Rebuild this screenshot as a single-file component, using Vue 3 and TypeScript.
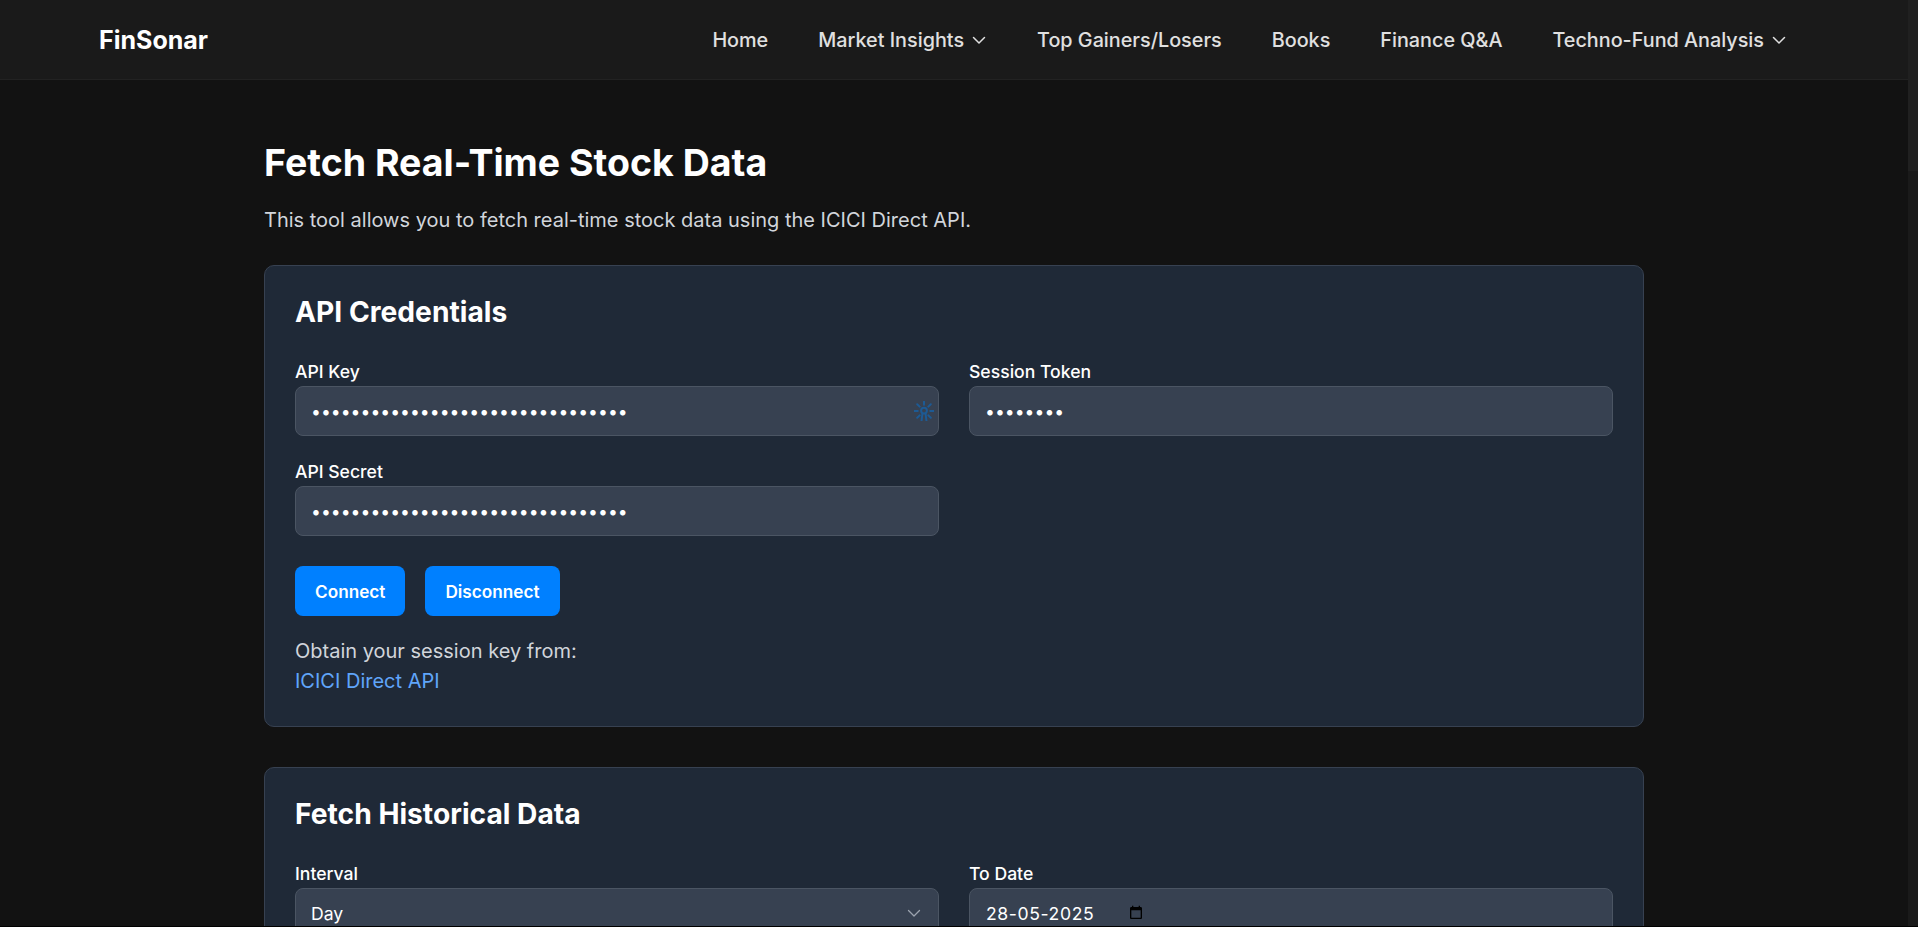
<script setup lang="ts">
const navItems: { label: string; caret?: boolean }[] = [
  { label: 'Home' },
  { label: 'Market Insights', caret: true },
  { label: 'Top Gainers/Losers' },
  { label: 'Books' },
  { label: 'Finance Q&A' },
  { label: 'Techno-Fund Analysis', caret: true },
]
const secret32 = 'x'.repeat(32)
const secret8 = 'x'.repeat(8)
</script>

<template>
  <div class="shell">
    <div class="page">
      <header class="nav">
        <div class="brand">FinSonar</div>
        <nav class="links">
          <a v-for="item in navItems" :key="item.label" class="link">
            {{ item.label }}
            <svg v-if="item.caret" class="caret" viewBox="0 0 16 16" fill="none" stroke="currentColor" stroke-width="1.5" stroke-linecap="round" stroke-linejoin="round"><path d="M2.5 5.5 8 11l5.5-5.5" /></svg>
          </a>
        </nav>
      </header>

      <main class="main">
        <h1 class="title">Fetch Real-Time Stock Data</h1>
        <p class="intro">This tool allows you to fetch real-time stock data using the ICICI Direct API.</p>

        <section class="card">
          <h2 class="card-title">API Credentials</h2>
          <div class="grid">
            <div class="field">
              <label class="label">API Key</label>
              <div class="input-wrap">
                <input class="input" type="password" :value="secret32" readonly />
                <svg class="ext" viewBox="1 1 18 18" fill="none" stroke="#1d5a94" stroke-width="1.8" stroke-linecap="round">
                  <circle cx="10" cy="9.6" r="2.6" />
                  <path d="M10 1.4v3M1.4 10h3M15.6 10h3M3.9 3.9l2.2 2.2M16.1 3.9l-2.2 2.2M3.9 16.1l2.2-2.2M16.1 16.1l-2.2-2.2M8.6 12.4 7.8 18.6M11.4 12.4l.8 6.2" />
                </svg>
              </div>
            </div>
            <div class="field">
              <label class="label">Session Token</label>
              <input class="input" type="password" :value="secret8" readonly />
            </div>
            <div class="field">
              <label class="label">API Secret</label>
              <input class="input" type="password" :value="secret32" readonly />
            </div>
          </div>
          <div class="actions">
            <button class="btn">Connect</button>
            <button class="btn">Disconnect</button>
          </div>
          <p class="hint">Obtain your session key from:</p>
          <a class="api-link">ICICI Direct API</a>
        </section>

        <section class="card">
          <h2 class="card-title">Fetch Historical Data</h2>
          <div class="grid">
            <div class="field">
              <label class="label">Interval</label>
              <div class="input select">
                <span>Day</span>
                <svg class="sel-caret" viewBox="0 0 16 16" fill="none" stroke="#9ca3af" stroke-width="1.3" stroke-linecap="round" stroke-linejoin="round"><path d="m2.5 5.5 5.5 5.5 5.5-5.5" /></svg>
              </div>
            </div>
            <div class="field">
              <label class="label">To Date</label>
              <div class="input date">
                <span class="date-text">28-05-2025</span>
                <svg class="cal" viewBox="0 0 24 24" fill="#000"><path d="M19 3h-1V1h-2v2H8V1H6v2H5c-1.1 0-2 .9-2 2v14c0 1.1.9 2 2 2h14c1.1 0 2-.9 2-2V5c0-1.1-.9-2-2-2zm0 16H5V8h14v11z" /></svg>
              </div>
            </div>
          </div>
        </section>
      </main>
    </div>
    <div class="scrollbar"><div class="thumb"></div></div>
  </div>
</template>

<style>
html, body { margin: 0; height: 100%; overflow: hidden; background: #000; }
</style>

<style scoped>
.shell { display: flex; height: 926px; overflow: hidden; font-family: Inter, "Noto Sans", sans-serif; color: #fff; background: #121212; }
.page { flex: 1; min-width: 0; height: 926px; overflow: hidden; }
.scrollbar { width: 10px; background: #1a1a1a; flex: none; }
.thumb { height: 171px; background: #202020; }
.nav { height: 79px; background: #1a1a1a; border-bottom: 1px solid #222; display: flex; align-items: center; padding: 0 121px 0 99px; justify-content: space-between; }
.brand { font-size: 25px; font-weight: 700; color: #fff; }
.links { display: flex; gap: 50px; }
.link { display: flex; align-items: center; gap: 7px; font-size: 19.8px; font-weight: 500; color: #e0e0e0; }
.caret { width: 16px; height: 16px; }
.main { width: 1380px; margin: 0 auto; padding-top: 60px; }
.title { margin: 0; font-size: 37.5px; line-height: 46px; font-weight: 700; color: #fff; }
.intro { margin: 20px 0 0; font-size: 20px; line-height: 28px; color: #d1d5db; }
.card { margin-top: 31px; background: #1f2937; border: 1px solid #374151; border-radius: 10px; padding: 30px; }
.card + .card { margin-top: 40px; }
.card-title { margin: 0 0 33px; font-size: 28.2px; line-height: 32px; font-weight: 700; color: #fff; }
.grid { display: grid; grid-template-columns: 1fr 1fr; column-gap: 30px; row-gap: 25px; }
.field { display: flex; flex-direction: column; min-width: 0; }
.label { font-size: 17.6px; line-height: 22px; font-weight: 500; margin-bottom: 3px; color: #fff; }
.input-wrap { position: relative; display: flex; }
.input { width: 100%; height: 50px; box-sizing: border-box; background: #374151; border: 1px solid #4b5563; border-radius: 8px; padding: 0 15px; display: flex; align-items: center; font: 400 17.6px Inter, "Noto Sans", sans-serif; color: #fff; outline: none; }
.ext { position: absolute; right: 5px; top: 15px; width: 20px; height: 20px; }
.select { justify-content: space-between; padding-right: 16px; }
.sel-caret { width: 16px; height: 16px; }
.date { gap: 34px; }
.date-text { letter-spacing: 0.6px; padding-left: 1px; }
.cal { width: 16px; height: 16px; }
.actions { display: flex; gap: 20px; margin-top: 30px; }
.btn { height: 50px; padding: 0 20px; background: #0080ff; color: #fff; border: 0; border-radius: 8px; font: 600 17.2px Inter, sans-serif; }
.hint { margin: 20px 0 0; font-size: 20px; line-height: 30px; color: #d1d5db; }
.api-link { display: block; font-size: 20px; line-height: 30px; color: #60a5fa; }
</style>
